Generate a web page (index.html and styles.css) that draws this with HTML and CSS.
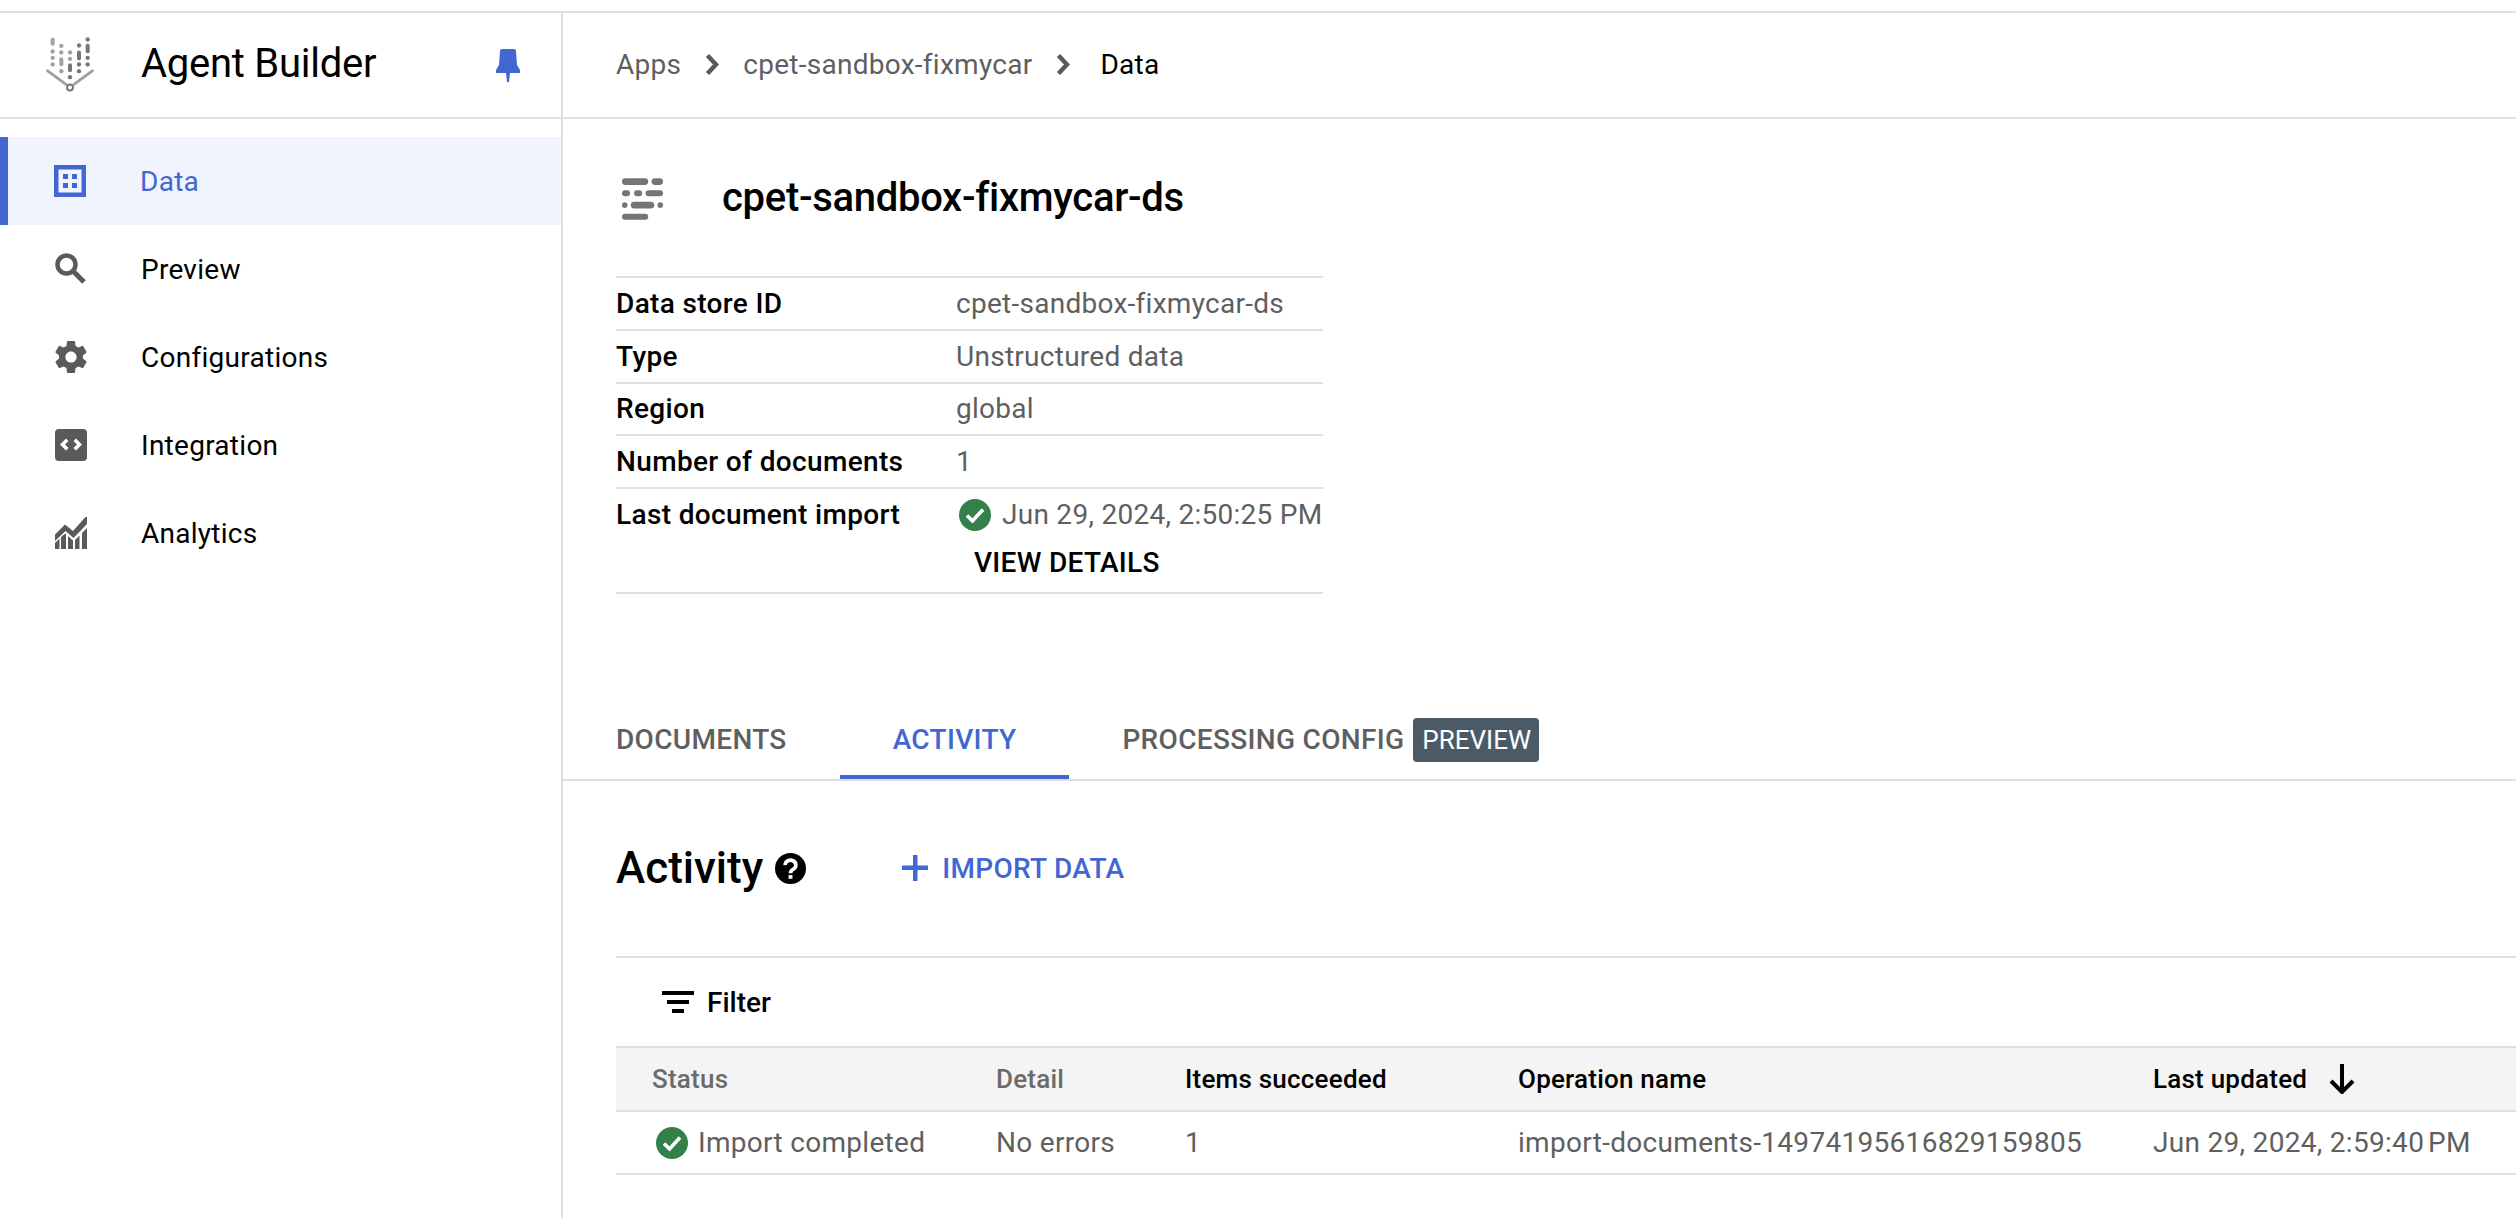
FILE: index.html
```html
<!DOCTYPE html>
<html>

<head>
    <title>Agent Builder</title>
    <link rel="stylesheet" href="styles.css">
</head>

<body>
    <div class="app">
        <aside class="sidebar">
            <div class="brand">
                <svg class="brand-logo" viewBox="48 50 144 164">
                    <g fill="#A0A1A5">
                        <rect x="62" y="52" width="12" height="24" rx="6" />
                        <circle cx="68" cy="93" r="6.500" />
                        <circle cx="68" cy="112" r="6.500" />
                        <circle cx="68" cy="132" r="6.500" />
                        <circle cx="94" cy="76" r="6.500" />
                        <circle cx="94" cy="96" r="6.500" />
                        <rect x="88" y="110" width="12" height="27" rx="6" />
                        <circle cx="94" cy="152" r="6.500" />
                        <circle cx="120" cy="96" r="6.500" />
                        <circle cx="120" cy="115" r="6.500" />
                    </g>
                    <g fill="#74777B">
                        <rect x="114" y="128" width="12" height="27" rx="6" />
                        <circle cx="120" cy="170" r="6.500" />
                        <circle cx="147" cy="75" r="6.500" />
                        <rect x="141" y="90" width="12" height="30" rx="6" />
                        <circle cx="147" cy="132" r="6.500" />
                        <circle cx="147" cy="152" r="6.500" />
                        <circle cx="173" cy="57" r="6.500" />
                        <rect x="167" y="70" width="12" height="28" rx="6" />
                        <circle cx="173" cy="112" r="6.500" />
                        <circle cx="173" cy="132" r="6.500" />
                    </g>
                    <path d="M53 151 L107 191 M187 151 L133 191" stroke="#A0A1A5" stroke-width="9" stroke-linecap="round" fill="none" />
                    <circle cx="120" cy="201" r="9" fill="none" stroke="#74777B" stroke-width="6" />
                </svg>
                <span class="brand-name">Agent Builder</span>
                <svg class="brand-pin" viewBox="0 0 24 33">
                    <path d="M6 0h12a2 2 0 0 1 2 2l1 14 3 5v3H14l-1 9h-2l-1-9H0v-3l3-5L4 2a2 2 0 0 1 2-2z" fill="#4267D2" />
                </svg>
            </div>
            <nav class="nav">
                <a class="nav-item active">
                    <svg class="nav-icon" viewBox="0 0 32 32">
                        <path fill-rule="evenodd" d="M0 0h32v32H0zM4.500 4.500v23h23v-23zM9 9h5v5H9zM18 9h5v5h-5zM9 18h5v5H9zM18 18h5v5h-5z" />
                    </svg>
                    Data
                </a>
                <a class="nav-item">
                    <svg class="nav-icon" viewBox="0 0 32 32">
                        <circle cx="11.500" cy="11.500" r="9" fill="none" stroke="#5A5A5A" stroke-width="4.500" />
                        <path d="M18 18 L29 29" fill="none" stroke="#5A5A5A" stroke-width="5" />
                    </svg>
                    Preview
                </a>
                <a class="nav-item">
                    <svg class="nav-icon" viewBox="2 2 20 20">
                        <path d="M19.430 12.980c.04-.32.07-.64.07-.98s-.03-.66-.07-.98l2.110-1.650c.19-.15.24-.42.12-.64l-2-3.460c-.12-.22-.39-.3-.61-.22l-2.490 1c-.52-.4-1.080-.73-1.690-.98l-.38-2.650C14.460 2.180 14.250 2 14 2h-4c-.25 0-.46.18-.49.420l-.38 2.650c-.61.25-1.170.59-1.690.98l-2.490-1c-.23-.09-.49 0-.61.22l-2 3.460c-.13.220-.07.490.12.640l2.110 1.650c-.04.320-.07.650-.07.980s.03.660.07.980l-2.110 1.650c-.19.150-.24.420-.12.640l2 3.460c.12.220.39.300.61.220l2.490-1c.52.400 1.080.730 1.690.980l.38 2.650c.03.240.24.420.49.420h4c.25 0 .46-.18.49-.42l.38-2.650c.61-.25 1.170-.59 1.690-.98l2.490 1c.23.090.49 0 .61-.22l2-3.460c.12-.22.07-.49-.12-.64l-2.110-1.650zM12 15.500c-1.930 0-3.500-1.570-3.500-3.500s1.570-3.500 3.500-3.500 3.500 1.570 3.500 3.500-1.570 3.500-3.500 3.500z" />
                    </svg>
                    Configurations
                </a>
                <a class="nav-item">
                    <svg class="nav-icon" viewBox="0 0 32 32">
                        <path fill-rule="evenodd" d="M4 0h24a4 4 0 0 1 4 4v24a4 4 0 0 1-4 4H4a4 4 0 0 1-4-4V4a4 4 0 0 1 4-4zM11 9.500 5 15.500l6 6 2.500-2.500L10 15.500l3.500-3.500zM21 9.500 18.500 12l3.500 3.500-3.500 3.500 2.500 2.500 6-6z" />
                    </svg>
                    Integration
                </a>
                <a class="nav-item">
                    <svg class="nav-icon" viewBox="0 0 32 32">
                        <path d="M0 17.500 10 7.500 18 14 30.500 0H32v7L18.500 21 10.500 14 0 24z" />
                        <path d="M0 26l4.500-4.500V32H0zM6 20l4.500-3.500 .5.500V32H6zM13 19l5 4.500V32h-5zM20 23l4.500-4.500V32H20zM27 16l5-5v21h-5z" />
                    </svg>
                    Analytics
                </a>
            </nav>
        </aside>

        <main class="content">
            <div class="crumbs">
                <span>Apps</span>
                <svg class="crumb-sep" viewBox="0 0 14 21"><path d="M2.500 1.500 11 10.500 2.500 19.500" /></svg>
                <span>cpet-sandbox-fixmycar</span>
                <svg class="crumb-sep crumb-sep-last" viewBox="0 0 14 21"><path d="M2.500 1.500 11 10.500 2.500 19.500" /></svg>
                <span class="crumb-current">Data</span>
            </div>

            <section class="store">
                <div class="store-head">
                    <svg class="store-icon" viewBox="36 52 122 124">
                        <g fill="#757575">
                            <rect x="36" y="52" width="78" height="20" rx="10" />
                            <rect x="124" y="52" width="34" height="20" rx="10" />
                            <rect x="36" y="88" width="24" height="18" rx="9" />
                            <rect x="72" y="88" width="24" height="18" rx="9" />
                            <rect x="106" y="88" width="52" height="18" rx="9" />
                            <circle cx="44" cy="132" r="8.500" />
                            <rect x="62" y="122" width="70" height="20" rx="10" />
                            <circle cx="150" cy="132" r="8.500" />
                            <rect x="36" y="158" width="78" height="18" rx="9" />
                        </g>
                    </svg>
                    <h1 class="store-title">cpet-sandbox-fixmycar-ds</h1>
                </div>
                <div class="facts">
                    <div class="fact">
                        <div class="fact-label">Data store ID</div>
                        <div class="fact-value">cpet-sandbox-fixmycar-ds</div>
                    </div>
                    <div class="fact">
                        <div class="fact-label">Type</div>
                        <div class="fact-value">Unstructured data</div>
                    </div>
                    <div class="fact">
                        <div class="fact-label">Region</div>
                        <div class="fact-value">global</div>
                    </div>
                    <div class="fact">
                        <div class="fact-label">Number of documents</div>
                        <div class="fact-value">1</div>
                    </div>
                    <div class="fact fact-tall">
                        <div class="fact-label">Last document import</div>
                        <div class="fact-value">
                            <div class="import-time">
                                <svg class="check" viewBox="0 0 32 32">
                                    <circle cx="16" cy="16" r="16" fill="#34804A" />
                                    <path d="M8 16.500 13.500 22 24 10.500" fill="none" stroke="#FFF" stroke-width="3.600" />
                                </svg>
                                Jun 29, 2024, 2:50:25 PM
                            </div>
                            <div class="view-details">VIEW DETAILS</div>
                        </div>
                    </div>
                </div>
            </section>

            <div class="tabs">
                <a class="tab">DOCUMENTS</a>
                <a class="tab tab-active">ACTIVITY</a>
                <a class="tab">PROCESSING CONFIG<span class="badge">PREVIEW</span></a>
            </div>

            <section class="activity">
                <div class="activity-head">
                    <h2 class="activity-title">Activity</h2>
                    <svg class="help" viewBox="0 0 32 32">
                        <circle cx="16" cy="16" r="16" fill="#000" />
                        <path d="M10.500 12.500a5.500 5 0 1 1 8.500 4.100c-2 1.300-3 2-3 4.400" fill="none" stroke="#FFF" stroke-width="3.800" />
                        <rect x="14" y="22.800" width="4" height="3.800" fill="#FFF" />
                    </svg>
                    <a class="import">
                        <svg class="plus" viewBox="0 0 26 26"><path d="M11 0h4.500v10.500H26V15H15.500v11H11V15H0v-4.500h11z" /></svg>
                        IMPORT DATA
                    </a>
                </div>

                <div class="filter">
                    <svg class="filter-icon" viewBox="0 0 32 22"><path d="M0 0h32v4H0zM5 9h22v4H5zM10 18h12v4H10z" /></svg>
                    Filter
                </div>

                <div class="grid grid-head">
                    <div class="cell muted-head">Status</div>
                    <div class="cell muted-head">Detail</div>
                    <div class="cell">Items succeeded</div>
                    <div class="cell">Operation name</div>
                    <div class="cell">Last updated
                        <svg class="sort" viewBox="0 0 26 30"><path d="M13 0v27M2 17l11 11 11-11" /></svg>
                    </div>
                </div>
                <div class="grid grid-row">
                    <div class="cell status">
                        <svg class="check" viewBox="0 0 32 32">
                            <circle cx="16" cy="16" r="16" fill="#34804A" />
                            <path d="M8 16.500 13.500 22 24 10.500" fill="none" stroke="#FFF" stroke-width="3.600" />
                        </svg>
                        Import completed
                    </div>
                    <div class="cell">No errors</div>
                    <div class="cell">1</div>
                    <div class="cell">import-documents-14974195616829159805</div>
                    <div class="cell">Jun 29, 2024, 2:59:40&#8239;PM</div>
                </div>
            </section>
        </main>
    </div>
</body>

</html>
```

FILE: styles.css
```css
* {
    box-sizing: border-box;
}

body {
    margin: 0;
    height: 1218px;
    overflow: hidden;
    background-color: #FFFFFF;
    color: #000000;
    font-family: Roboto, sans-serif;
    font-size: 28px;
    letter-spacing: 0.27px;
}

.app {
    display: flex;
    height: 100%;
    padding-top: 11px;
}

.app::before {
    content: "";
    position: absolute;
    top: 11px;
    left: 0;
    right: 0;
    border-top: 2px solid #E0E0E0;
}

/* sidebar */

.sidebar {
    width: 563px;
    flex-shrink: 0;
    border-right: 2px solid #E0E0E0;
}

.brand {
    display: flex;
    align-items: center;
    height: 108px;
    border-bottom: 2px solid #E0E0E0;
    padding: 0 41px 2px 46px;
}

.brand-logo {
    width: 48px;
    height: 55px;
    margin: 2px 47px 0 0;
}

.brand-name {
    font-size: 40px;
    letter-spacing: -0.25px;
    flex: 1;
}

.brand-pin {
    width: 24px;
    height: 33px;
    margin-top: 4px;
}

.nav {
    padding-top: 18px;
}

.nav-item {
    display: flex;
    align-items: center;
    height: 88px;
    padding-left: 55px;
}

.nav-item.active {
    background-color: #F0F4FD;
    border-left: 8px solid #4267D2;
    padding-left: 46px;
    color: #4267D2;
}

.nav-icon {
    width: 32px;
    height: 32px;
    margin-right: 54px;
    fill: #5A5A5A;
}

.active .nav-icon {
    fill: #4267D2;
}

/* main */

.content {
    flex: 1;
    min-width: 0;
}

.crumbs {
    display: flex;
    align-items: center;
    height: 108px;
    border-bottom: 2px solid #E0E0E0;
    padding-left: 53px;
    color: #5F5F5F;
}

.crumb-sep {
    width: 14px;
    height: 21px;
    margin: 0 24px;
    fill: none;
    stroke: #5A5A5A;
    stroke-width: 4.500;
}

.crumb-sep-last {
    margin-right: 30px;
}

.crumb-current {
    color: #000000;
}

.store {
    padding-left: 53px;
}

.store-head {
    display: flex;
    align-items: center;
    height: 157px;
}

.store-icon {
    width: 41px;
    height: 42px;
    margin: 2px 59px 0 6px;
}

.store-title {
    margin: 0;
    font-size: 40px;
    font-weight: 500;
    letter-spacing: -0.3px;
}

.facts {
    width: 707px;
    border-top: 2px solid #E0E0E0;
}

.fact {
    display: flex;
    height: 52.750px;
    border-bottom: 2px solid #E0E0E0;
    align-items: center;
}

.fact-tall {
    height: 105px;
    align-items: flex-start;
    padding-top: 9px;
}

.fact-label {
    width: 340px;
    font-weight: 500;
    letter-spacing: 0.35px;
}

.fact-value {
    color: #5F5F5F;
    flex: 1;
}

.import-time {
    display: flex;
    align-items: center;
    gap: 11px;
    margin-left: 3px;
    white-space: nowrap;
}

.check {
    width: 32px;
    height: 32px;
    flex-shrink: 0;
}

.view-details {
    margin: 15px 0 0 18px;
    color: #000000;
    font-weight: 500;
    letter-spacing: 0.3px;
}

.tabs {
    display: flex;
    height: 111px;
    margin-top: 76px;
    padding-left: 53px;
    border-bottom: 2px solid #E0E0E0;
    align-items: stretch;
}

.tab {
    display: flex;
    align-items: center;
    padding: 30px 53px 0;
    font-weight: 500;
    letter-spacing: 0.32px;
    color: #5F5F5F;
    position: relative;
}

.tab:first-child {
    padding-left: 0;
}

.tab-active {
    color: #4267D2;
}

.tab-active::after {
    content: "";
    position: absolute;
    left: 0;
    right: 0;
    bottom: 0;
    height: 4px;
    background-color: #4267D2;
}

.badge {
    margin-left: 9px;
    padding: 0 8px 0 9px;
    height: 44px;
    line-height: 44px;
    border-radius: 4px;
    background-color: #4A5A66;
    color: #FFFFFF;
    font-size: 26px;
    font-weight: 400;
    letter-spacing: 0;
}

/* activity */

.activity {
    padding-left: 53px;
}

.activity-head {
    display: flex;
    align-items: center;
    height: 110px;
    margin-top: 32px;
    margin-bottom: 33px;
}

.activity-title {
    margin: 0;
    font-size: 44px;
    font-weight: 500;
    letter-spacing: 0;
}

.help {
    width: 31px;
    height: 31px;
    margin-left: 12px;
}

.import {
    display: flex;
    align-items: center;
    margin-left: 96px;
    color: #4267D2;
    font-weight: 500;
    letter-spacing: 0.3px;
}

.plus {
    width: 26px;
    height: 26px;
    margin-right: 14px;
    fill: #4267D2;
}

.filter {
    display: flex;
    align-items: center;
    height: 90px;
    padding-left: 46px;
    border-top: 2px solid #E0E0E0;
    font-weight: 500;
    letter-spacing: 0;
}

.filter-icon {
    width: 32px;
    height: 22px;
    margin-right: 13px;
}

.grid {
    display: grid;
    grid-template-columns: 344px 189px 333px 635px 1fr;
    align-items: center;
    padding-left: 36px;
    border-bottom: 2px solid #E0E0E0;
}

.grid-head {
    height: 66px;
    border-top: 2px solid #E0E0E0;
    background-color: #F4F4F4;
    font-size: 26px;
    font-weight: 500;
    letter-spacing: 0.22px;
}

.grid-row {
    height: 63px;
    color: #5F5F5F;
    letter-spacing: 0.3px;
}

.muted-head {
    color: #6B6B6B;
}

.cell {
    display: flex;
    align-items: center;
    white-space: nowrap;
}

.status {
    gap: 10px;
    margin-left: 4px;
}

.sort {
    width: 26px;
    height: 30px;
    margin-left: 22px;
    fill: none;
    stroke: #000000;
    stroke-width: 4;
}
```
